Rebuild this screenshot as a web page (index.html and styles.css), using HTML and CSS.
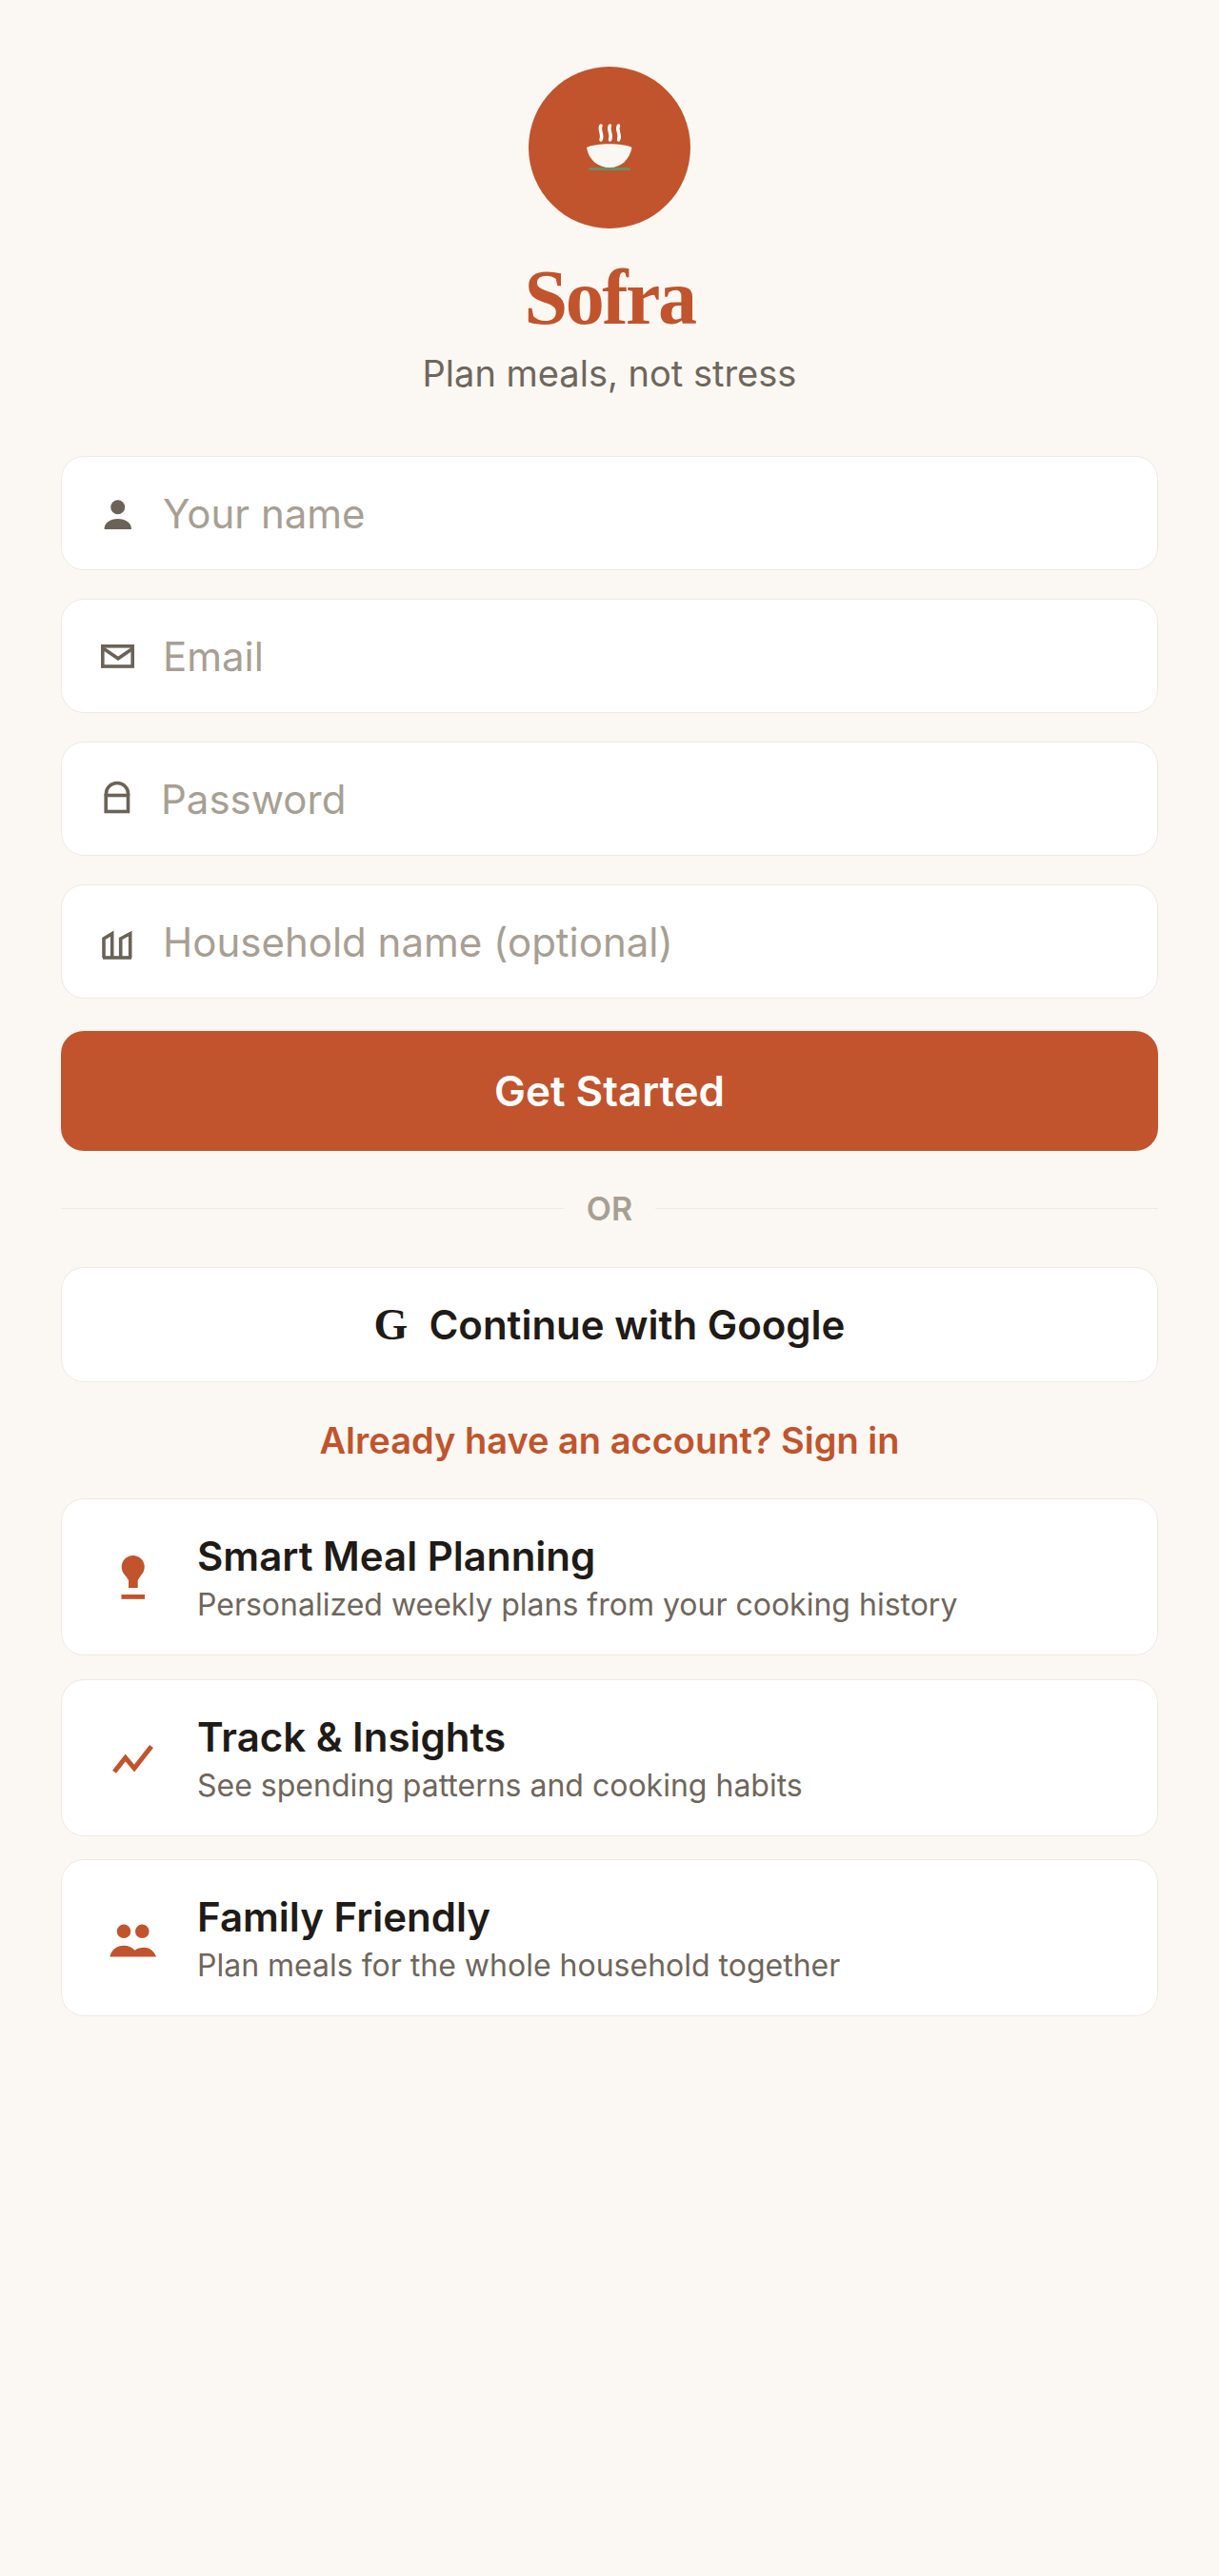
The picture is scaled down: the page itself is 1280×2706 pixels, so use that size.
FILE: index.html
```html
<!DOCTYPE html>
<html lang="en">
<head>
    <meta charset="UTF-8">
    <meta name="viewport" content="width=device-width, initial-scale=1.0">
    <title>Sofra - Plan meals, not stress</title>
    <link rel="stylesheet" href="styles.css">
</head>
<body>
    <div class="container">
        <header class="brand">
            <div class="logo">
                <svg width="170" height="170" viewBox="0 0 170 170">
                    <g fill="none" stroke="#fbf8f3" stroke-width="3.500" stroke-linecap="round">
                        <path d="M76 62c-3 5 3 9 0 15"/>
                        <path d="M85.500 62c-3 5 3 9 0 15"/>
                        <path d="M94.500 62c-3 5 3 9 0 15"/>
                    </g>
                    <path d="M61 85c9-5 39-5 47.500 0c-2.500 13-11.500 21-23.500 21s-22-8-24-21z" fill="#fbf8f3"/>
                    <rect x="63" y="106" width="44" height="3" rx="1.500" fill="#6b8f63"/>
                </svg>
            </div>
            <h1>Sofra</h1>
            <p class="tagline">Plan meals, not stress</p>
        </header>

        <form class="signup-form">
            <label class="field">
                <svg class="field-icon" viewBox="0 0 40 40">
                    <circle cx="19.700" cy="13.700" r="7.500"/>
                    <path d="M5.500 37c0-7 6-11 14.200-11s14.300 4 14.300 11z"/>
                </svg>
                <input type="text" placeholder="Your name">
            </label>
            <label class="field">
                <svg class="field-icon" viewBox="0 0 40 40">
                    <rect x="3.800" y="9.800" width="31.400" height="21.200" class="line"/>
                    <path d="M5 12.500l15 10.200l15-10.200" class="line"/>
                </svg>
                <input type="email" placeholder="Email">
            </label>
            <label class="field field-tight">
                <svg class="field-icon" viewBox="0 0 40 40">
                    <rect x="7.200" y="16.500" width="23.300" height="17" class="line"/>
                    <path d="M7.500 17v-2.500a11.500 11 0 0 1 23 0v2.500" class="line"/>
                </svg>
                <input type="password" placeholder="Password">
            </label>
            <label class="field">
                <svg class="field-icon" viewBox="0 0 40 40">
                    <path d="M5 37v-20l8.700-5.300v25.300" class="line"/>
                    <path d="M22.700 37v-20l10-5.300v25.300" class="line"/>
                    <path d="M4 37h30" class="line"/>
                </svg>
                <input type="text" placeholder="Household name (optional)">
            </label>
            <button type="button" class="btn-primary">Get Started</button>
        </form>

        <div class="divider"><span>OR</span></div>

        <button type="button" class="btn-google"><span class="g-mark">G</span>Continue with Google</button>

        <a href="#" class="signin-link">Already have an account? Sign in</a>

        <section class="features">
            <div class="feature">
                <svg class="feature-icon" viewBox="0 0 72 60">
                    <circle cx="35.700" cy="19" r="12"/>
                    <path d="M27 27l4 6v8h9.700v-8l3.800-6z"/>
                    <rect x="23.500" y="48" width="24.500" height="4.800"/>
                </svg>
                <div class="feature-text">
                    <h2>Smart Meal Planning</h2>
                    <p>Personalized weekly plans from your cooking history</p>
                </div>
            </div>
            <div class="feature">
                <svg class="feature-icon" viewBox="0 0 72 60">
                    <path d="M16 45.200l11.700-14.700l9.300 11l18-23" class="zig"/>
                </svg>
                <div class="feature-text">
                    <h2>Track &amp; Insights</h2>
                    <p>See spending patterns and cooking habits</p>
                </div>
            </div>
            <div class="feature">
                <svg class="feature-icon" viewBox="0 0 72 60">
                    <circle cx="26" cy="22.800" r="7.300"/>
                    <circle cx="45.300" cy="22.800" r="7.300"/>
                    <path d="M11.300 49.500c1.700-7.500 7.700-11.700 14.700-11.700c5 0 9 2 11.700 5c2.300-2.200 5.800-3 10-3c5.300 0 10.300 4.200 12.300 9.700z"/>
                </svg>
                <div class="feature-text">
                    <h2>Family Friendly</h2>
                    <p>Plan meals for the whole household together</p>
                </div>
            </div>
        </section>
    </div>
</body>
</html>
```

FILE: styles.css
```css
* {
    box-sizing: border-box;
}

body {
    font-family: Inter, "Liberation Sans", sans-serif;
    background-color: #fbf8f3;
    color: #1f1b17;
    margin: 0;
    padding: 0;
}

.container {
    padding: 70px 64px 0;
    display: flex;
    flex-direction: column;
}

.brand {
    display: flex;
    flex-direction: column;
    align-items: center;
    margin-bottom: 61px;
}

.logo {
    width: 170px;
    height: 170px;
    border-radius: 50%;
    background: #c1542c;
}

.logo svg {
    display: block;
}

h1 {
    margin: 28px 0 0;
    font-family: "Liberation Serif", serif;
    font-size: 82px;
    line-height: 90px;
    font-weight: 700;
    letter-spacing: -2.500px;
    color: #c1542c;
}

.tagline {
    margin: 8px 0 0;
    font-size: 38px;
    line-height: 52px;
    color: #6f665c;
}

.signup-form {
    display: flex;
    flex-direction: column;
    gap: 30px;
}

.field {
    display: flex;
    align-items: center;
    gap: 27px;
    height: 120px;
    padding-left: 39px;
    background: #fff;
    border: 1px solid #efe9e1;
    border-radius: 24px;
}

.field-tight {
    gap: 25px;
}

.field-icon {
    width: 40px;
    height: 40px;
    flex-shrink: 0;
    fill: #6b6258;
}

.field-icon .line {
    fill: none;
    stroke: #6b6258;
    stroke-width: 3.600;
}

.field input {
    flex: 1;
    border: none;
    outline: none;
    background: transparent;
    padding: 0;
    font-family: inherit;
    font-size: 42px;
    color: #1f1b17;
}

.field input::placeholder {
    color: #a89f94;
    opacity: 1;
}

.btn-primary {
    height: 126px;
    margin-top: 4px;
    border: none;
    border-radius: 24px;
    background-color: #c1542c;
    color: #fff;
    font-family: inherit;
    font-size: 44px;
    font-weight: 600;
    cursor: pointer;
}

.divider {
    display: flex;
    align-items: center;
    gap: 24px;
    height: 40px;
    margin-top: 40px;
    color: #a89f94;
    font-size: 34px;
    font-weight: 600;
}

.divider::before,
.divider::after {
    content: "";
    flex: 1;
    height: 1px;
    background: #efe9e1;
}

.btn-google {
    display: flex;
    align-items: center;
    justify-content: center;
    gap: 22px;
    height: 121px;
    margin-top: 42px;
    background: #fff;
    border: 1px solid #efe9e1;
    border-radius: 24px;
    color: #1f1b17;
    font-family: inherit;
    font-size: 42px;
    font-weight: 600;
    cursor: pointer;
}

.g-mark {
    font-family: "Liberation Serif", serif;
    font-weight: 700;
    font-size: 46px;
}

.signin-link {
    margin-top: 36px;
    text-align: center;
    font-size: 38px;
    line-height: 50px;
    font-weight: 600;
    color: #c1542c;
    text-decoration: none;
}

.features {
    display: flex;
    flex-direction: column;
    gap: 24.500px;
    margin-top: 36px;
}

.feature {
    display: flex;
    align-items: center;
    gap: 31px;
    height: 165px;
    padding-left: 39px;
    background: #fff;
    border: 1px solid #efe9e1;
    border-radius: 24px;
}

.feature-icon {
    width: 72px;
    height: 60px;
    flex-shrink: 0;
    fill: #c1542c;
}

.feature-icon .zig {
    fill: none;
    stroke: #c1542c;
    stroke-width: 5;
}

.feature-text {
    padding-top: 2px;
}

.feature-text h2 {
    margin: 0;
    font-size: 42px;
    line-height: 56px;
    font-weight: 600;
}

.feature-text p {
    margin: 1px 0 0;
    font-size: 32px;
    line-height: 44px;
    color: #6f665c;
}
```
